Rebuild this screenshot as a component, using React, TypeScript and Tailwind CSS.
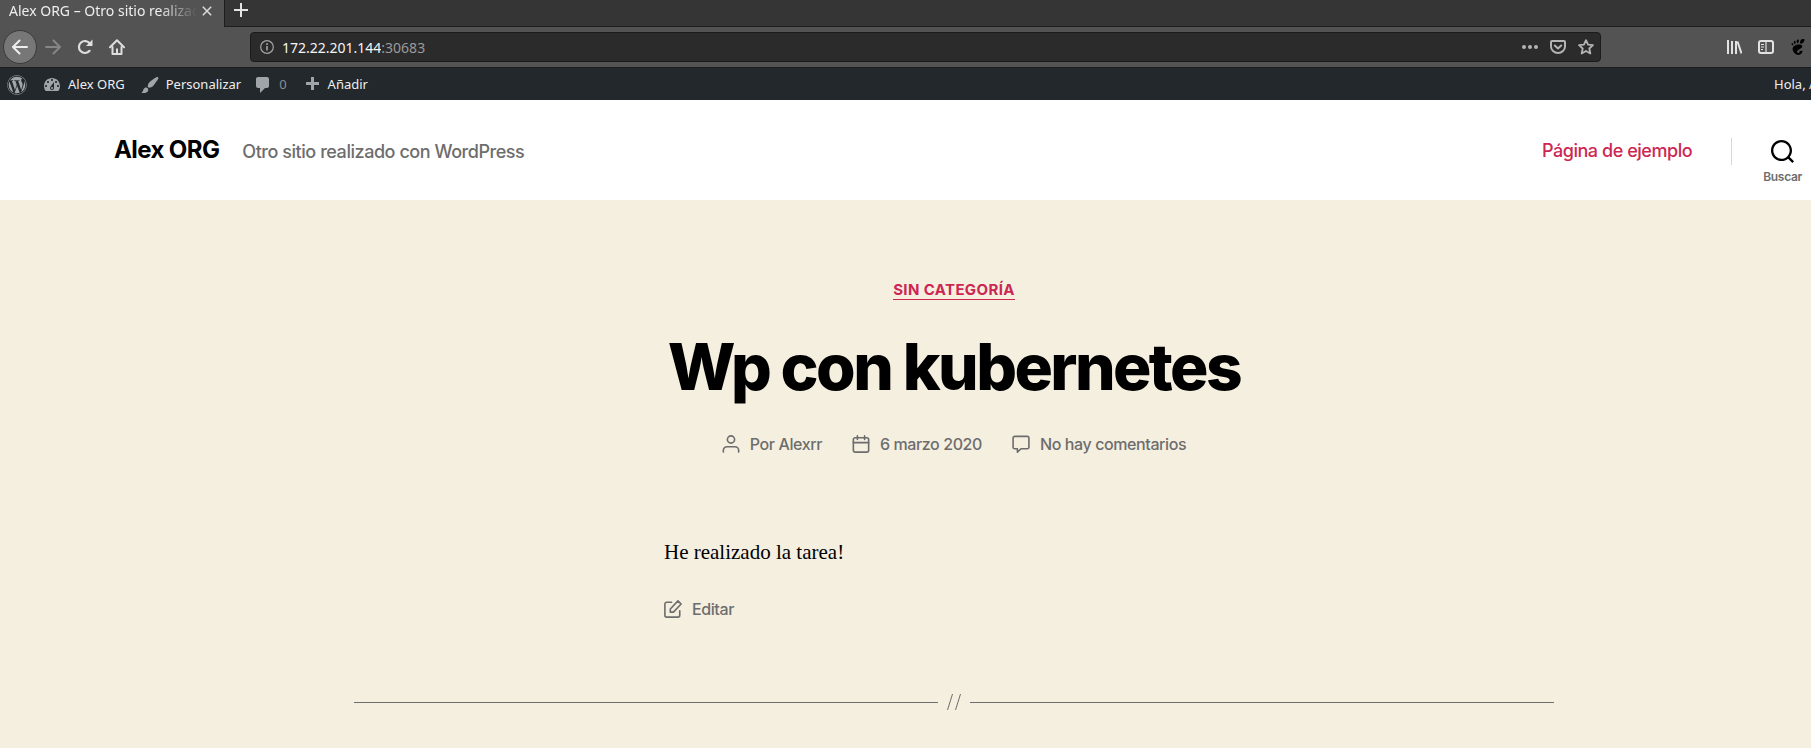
import type { ReactNode } from 'react'
import { FaWordpress } from 'react-icons/fa'
import { SiGnome } from 'react-icons/si'

function Dashicon({ d, className = '' }: { d: string; className?: string }) {
  return (
    <svg viewBox="0 0 20 20" className={`size-5 shrink-0 fill-[#a0a5aa] ${className}`} aria-hidden="true">
      <path d={d} />
    </svg>
  )
}

function LineIcon({ children, className }: { children: ReactNode; className: string }) {
  return (
    <svg
      viewBox="0 0 20 20"
      fill="none"
      stroke="currentColor"
      strokeWidth="1.8"
      strokeLinecap="round"
      strokeLinejoin="round"
      className={`shrink-0 ${className}`}
      aria-hidden="true"
    >
      {children}
    </svg>
  )
}

const DASHBOARD =
  'M3.76 16h12.48c1.1-1.37 1.76-3.11 1.76-5 0-4.42-3.58-8-8-8s-8 3.58-8 8c0 1.89.66 3.63 1.76 5zM10 4c.55 0 1 .45 1 1s-.45 1-1 1-1-.45-1-1 .45-1 1-1zM6 6c.55 0 1 .45 1 1s-.45 1-1 1-1-.45-1-1 .45-1 1-1zm8 0c.55 0 1 .45 1 1s-.45 1-1 1-1-.45-1-1 .45-1 1-1zm-5.37 5.55L12 7v6c0 1.1-.9 2-2 2s-2-.9-2-2c0-.57.24-1.08.63-1.45zM4 10c.55 0 1 .45 1 1s-.45 1-1 1-1-.45-1-1 .45-1 1-1zm12 0c.55 0 1 .45 1 1s-.45 1-1 1-1-.45-1-1 .45-1 1-1zm-5 3c0-.55-.45-1-1-1s-1 .45-1 1 .45 1 1 1 1-.45 1-1z'
const BRUSH =
  'M18.33 3.57s.27-.8-.31-1.36c-.53-.52-1.22-.24-1.22-.24-.61.3-5.76 3.47-7.67 5.57-.86.96-2.06 3.79-1.09 4.82.92.98 3.96-.17 4.79-1 2.06-2.06 5.21-7.17 5.5-7.79zM1.4 17.65c2.37-1.56 1.46-3.41 3.23-4.64.93-.65 2.22-.62 3.08.29.63.67.8 2.57-.16 3.46-1.57 1.45-4 1.55-6.15.89z'
const COMMENT =
  'M5 2h9c1.1 0 2 .9 2 2v7c0 1.1-.9 2-2 2h-2l-5 5v-5H5c-1.1 0-2-.9-2-2V4c0-1.1.9-2 2-2z'
const PLUS = 'M17 7v3h-5v5H9v-5H4V7h5V2h3v5h5z'

function BrowserChrome() {
  return (
    <div className="font-['Noto_Sans',sans-serif] text-[#eeeeee]">
      <div className="flex h-[27px] bg-[#353535]">
        <div className="flex w-56 items-center bg-[#535353] pr-[7px] pb-[5px] pl-[9px]">
          <span className="min-w-0 flex-1 overflow-hidden text-sm whitespace-nowrap [mask-image:linear-gradient(to_right,black_80%,transparent)]">
            Alex ORG – Otro sitio realizado con WordPress
          </span>
          <button aria-label="Cerrar pestaña" className="flex size-5 items-center justify-center">
            <svg viewBox="0 0 10 10" className="size-[10px] stroke-[#dcdcdc]" strokeWidth="1.5">
              <path d="M0.8 0.8l8.4 8.4M9.2 0.8l-8.4 8.4" />
            </svg>
          </button>
        </div>
        <div className="flex flex-1 items-center border-b border-l border-[#1e1e1e] pb-[6px] pl-[9px]">
          <button aria-label="Nueva pestaña">
            <svg viewBox="0 0 14 14" className="size-[14px] stroke-[#e4e4e4]" strokeWidth="2">
              <path d="M7 0v14M0 7h14" />
            </svg>
          </button>
        </div>
      </div>

      <div className="flex h-[41px] items-center border-b border-[#1d1d1d] bg-[#535353]">
        <div className="flex w-[250px] shrink-0 items-center pl-[3px]">
          <button
            aria-label="Atrás"
            className="flex size-[34px] items-center justify-center rounded-full border border-[#3a3a3a] bg-[#777777]"
          >
            <svg viewBox="0 0 16 16" className="size-4" fill="none" stroke="#eee" strokeWidth="2" strokeLinecap="round" strokeLinejoin="round">
              <path d="M15 8H1.500M7.500 1.500L1 8l6.500 6.500" />
            </svg>
          </button>
          <button aria-label="Adelante" className="ml-2 flex size-4 items-center">
            <svg viewBox="0 0 16 16" className="size-4" fill="none" stroke="#868686" strokeWidth="2" strokeLinecap="round" strokeLinejoin="round">
              <path d="M1 8h13.500M8.500 1.500L15 8l-6.500 6.500" />
            </svg>
          </button>
          <button aria-label="Recargar" className="ml-4">
            <svg viewBox="0 0 16 16" className="size-4" fill="none" stroke="#dedede" strokeWidth="2.200">
              <path d="M12.600 11.800A6 6 0 1 1 12.800 4.500" strokeLinecap="round" />
              <path d="M15.500 0.500v6.500h-6.500z" fill="#dedede" stroke="none" />
            </svg>
          </button>
          <button aria-label="Inicio" className="ml-4">
            <svg viewBox="0 0 16 16" className="size-4" fill="none" stroke="#dedede" strokeWidth="2" strokeLinecap="round" strokeLinejoin="round">
              <path d="M1 8.200L8 1.200l7 7" />
              <path d="M3.500 8v7h9V8" />
              <path d="M7 9.500h2V15H7z" fill="#dedede" stroke="none" />
            </svg>
          </button>
        </div>

        <div className="flex h-[30px] flex-1 items-center rounded-[4px] border border-[#1b1b1b] bg-[#2b2b2b] pr-[6px] pl-[9px] text-sm">
          <svg viewBox="0 0 14 14" className="mr-2 size-[14px]" fill="none" stroke="#a5a5a5" strokeWidth="1.200" aria-hidden="true">
            <circle cx="7" cy="7" r="6.300" />
            <path d="M7 6v4.500M7 3.300v1.600" strokeWidth="1.600" />
          </svg>
          <input
            aria-label="Dirección"
            defaultValue="172.22.201.144"
            className="field-sizing-content bg-transparent pt-px text-[#f5f5f5] outline-none"
          />
          <span className="flex-1 pt-px text-[#9a9a9a]">:30683</span>
          <button aria-label="Acciones de página">
            <svg viewBox="0 0 16 16" className="size-4 fill-[#b4b4b4]">
              <circle cx="2" cy="8" r="2" />
              <circle cx="8" cy="8" r="2" />
              <circle cx="14" cy="8" r="2" />
            </svg>
          </button>
          <button aria-label="Guardar en Pocket" className="ml-3">
            <svg viewBox="0 0 16 16" className="size-4" fill="none" stroke="#b4b4b4" strokeWidth="2" strokeLinecap="round" strokeLinejoin="round">
              <path d="M2 2h12a1 1 0 0 1 1 1v4.500a7 6.500 0 0 1-14 0V3a1 1 0 0 1 1-1z" />
              <path d="M4.800 6.500L8 9.500l3.200-3" />
            </svg>
          </button>
          <button aria-label="Añadir a marcadores" className="ml-3">
            <svg viewBox="0 0 16 16" className="size-4" fill="none" stroke="#b4b4b4" strokeWidth="1.800" strokeLinejoin="round">
              <path d="M8 1.200l2.050 4.500 4.900.5-3.650 3.300 1.050 5L8 12l-4.350 2.500 1.050-5L1.050 6.200l4.900-.5z" />
            </svg>
          </button>
        </div>

        <div className="flex w-[210px] shrink-0 items-center justify-end gap-4 pr-[5px]">
          <button aria-label="Biblioteca">
            <svg viewBox="0 0 16 16" className="size-4" fill="none" stroke="#e2e2e2" strokeWidth="2">
              <path d="M2 1v14M6 2v13M10 2v13" />
              <path d="M11.500 2.500l4 12" />
            </svg>
          </button>
          <button aria-label="Barra lateral">
            <svg viewBox="0 0 16 16" className="size-4" fill="none" stroke="#e2e2e2" strokeWidth="2">
              <rect x="1" y="2" width="14" height="12" rx="2" />
              <path d="M8 2v12" strokeWidth="1.200" />
              <path d="M3 5.500h3M3 8h3M3 10.500h2" strokeWidth="1" />
            </svg>
          </button>
          <button aria-label="Integración con GNOME Shell">
            <SiGnome className="size-4 text-black" />
          </button>
        </div>
      </div>
    </div>
  )
}

function AdminBar() {
  return (
    <nav className="flex h-8 items-center bg-[#23282d] pt-px pl-[7px] font-['Noto_Sans',sans-serif] text-[13px] whitespace-nowrap text-[#eeeeee]">
      <a href="#wp" aria-label="Acerca de WordPress">
        <FaWordpress className="size-5 text-[#a0a5aa]" />
      </a>
      <a href="#sitio" className="ml-[15px] flex items-center gap-[6px]">
        <Dashicon d={DASHBOARD} />
        Alex ORG
      </a>
      <a href="#personalizar" className="ml-[15px] flex items-center gap-[6px]">
        <Dashicon d={BRUSH} />
        Personalizar
      </a>
      <a href="#comentarios" className="ml-3 flex items-center gap-[6px] text-[#8b8f93]">
        <Dashicon d={COMMENT} />
        0
      </a>
      <a href="#nuevo" className="ml-[15px] flex items-center gap-[6px]">
        <Dashicon d={PLUS} />
        Añadir
      </a>
      <a href="#cuenta" className="ml-auto w-[134px]">
        Hola, Alexrr
      </a>
    </nav>
  )
}

function SiteHeader() {
  return (
    <header className="flex h-[100px] items-center justify-between bg-white pr-[106px] pl-[114px] font-medium">
      <div className="flex items-baseline gap-[23px]">
        <a href="#inicio" className="text-2xl font-bold tracking-tight text-black">
          Alex ORG
        </a>
        <p className="text-lg tracking-tight text-[#6d6d6d]">Otro sitio realizado con WordPress</p>
      </div>
      <div className="flex items-center pt-0.5">
        <a href="#ejemplo" className="text-lg tracking-tight text-[#cd2653]">
          Página de ejemplo
        </a>
        <span className="ml-[39px] h-[27px] w-px bg-[#dcd7ca]" />
        <button className="ml-[31px] flex flex-col items-center gap-[6px] pt-[22px] text-xs font-semibold tracking-tight text-[#6d6d6d]">
          <svg viewBox="0 0 23 23" className="size-[23px] fill-black" aria-hidden="true">
            <path
              transform="translate(-20 -31)"
              d="M38.710696,48.0601792 L43,52.3494831 L41.3494831,54 L37.0601792,49.710696 C35.2632422,51.1481185 32.9839107,52.0076499 30.5038249,52.0076499 C24.7027226,52.0076499 20,47.3049272 20,41.5038249 C20,35.7027226 24.7027226,31 30.5038249,31 C36.3049272,31 41.0076499,35.7027226 41.0076499,41.5038249 C41.0076499,43.9839107 40.1481185,46.2632422 38.710696,48.0601792 Z M36.3875844,47.1716785 C37.8030221,45.7026647 38.6734666,43.7048964 38.6734666,41.5038249 C38.6734666,36.9918565 35.0157934,33.3341833 30.5038249,33.3341833 C25.9918565,33.3341833 22.3341833,36.9918565 22.3341833,41.5038249 C22.3341833,46.0157934 25.9918565,49.6734666 30.5038249,49.6734666 C32.7048964,49.6734666 34.7026647,48.8030221 36.1716785,47.3875844 Z"
            />
          </svg>
          Buscar
        </button>
      </div>
    </header>
  )
}

function Post() {
  return (
    <main className="flex flex-1 flex-col items-center bg-[#f5efe0] pt-20 text-[#6d6d6d]">
      <a href="#categoria" className="border-b border-[#cd2653] text-[15px] leading-[19px] font-bold tracking-wide text-[#cd2653]">
        SIN CATEGORÍA
      </a>
      <h1 className="mt-[31px] text-[64px] leading-[72px] font-extrabold tracking-[-0.04em] text-black">Wp con kubernetes</h1>
      <ul className="mt-[29px] flex gap-[30px] font-medium tracking-tight">
        <li className="flex items-center gap-[10px]">
          <LineIcon className="size-[18px]">
            <circle cx="10" cy="5" r="4" />
            <path d="M1.500 19v-2a4 4 0 0 1 4-4h9a4 4 0 0 1 4 4v2" />
          </LineIcon>
          <span>
            Por <a href="#autor">Alexrr</a>
          </span>
        </li>
        <li className="flex items-center gap-[10px]">
          <LineIcon className="size-[18px]">
            <rect x="1.500" y="3" width="17" height="16" rx="2" />
            <path d="M1.500 8.500h17M6 1v4M14 1v4" />
          </LineIcon>
          <a href="#fecha">6 marzo 2020</a>
        </li>
        <li className="flex items-center gap-[10px]">
          <LineIcon className="size-[18px]">
            <path d="M3 1.500h14a1.800 1.800 0 0 1 1.800 1.800v10.200a1.800 1.800 0 0 1-1.800 1.800h-7l-4 3.700v-3.700H3a1.800 1.800 0 0 1-1.800-1.800V3.300A1.800 1.800 0 0 1 3 1.500z" />
          </LineIcon>
          <a href="#respond">No hay comentarios</a>
        </li>
      </ul>
      <div className="mt-[81px] w-[580px]">
        <p className="font-['Liberation_Serif',serif] text-[21px] leading-[31px] text-black">He realizado la tarea!</p>
        <a href="#editar" className="mt-[29px] flex items-center gap-[10px] font-medium tracking-tight">
          <LineIcon className="size-[18px]">
            <path d="M8.500 2.500H3a2 2 0 0 0-2 2V17a2 2 0 0 0 2 2h12.500a2 2 0 0 0 2-2v-5" />
            <path d="M15.500 1l3.500 3.500-8.500 9H7V10z" />
          </LineIcon>
          Editar
        </a>
      </div>
      <div role="separator" className="mt-[73px] flex w-[1200px] items-center gap-2">
        <span className="h-px flex-1 bg-[#6d6d6d]" />
        <svg viewBox="0 0 16 16" className="size-4" fill="none" stroke="#6d6d6d" strokeWidth="1">
          <path d="M1.500 16L6.500 0M9.500 16L14.500 0" />
        </svg>
        <span className="h-px flex-1 bg-[#6d6d6d]" />
      </div>
    </main>
  )
}

export default function App() {
  return (
    <div className="flex min-h-screen flex-col overflow-hidden">
      <BrowserChrome />
      {/* The page is laid out wider than the visible window. */}
      <div className="flex w-[calc(100%+97px)] flex-1 flex-col font-['Inter',sans-serif]">
        <AdminBar />
        <SiteHeader />
        <Post />
      </div>
    </div>
  )
}
